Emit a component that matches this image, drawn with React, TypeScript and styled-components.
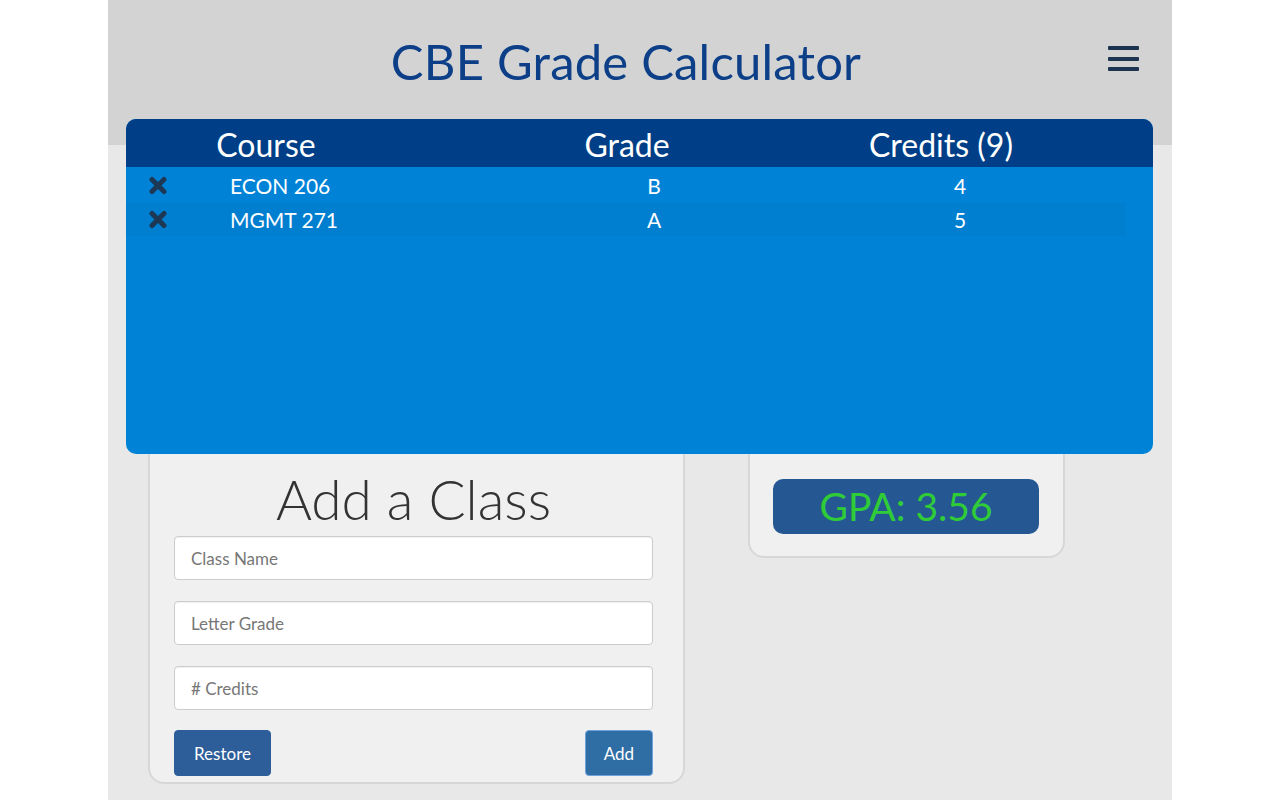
import React from "react";
import styled, { createGlobalStyle } from "styled-components";

const GlobalStyle = createGlobalStyle`
  html, body {
    margin: 0;
    padding: 0;
    background: #ffffff;
  }
  body {
    font-family: Lato, "Noto Sans", "Liberation Sans", sans-serif;
  }
  * {
    box-sizing: border-box;
  }
`;

const Page = styled.div`
  width: 1064px;
  min-height: 100vh;
  margin: 0 auto;
  background: #e8e8e8;
  display: flex;
  flex-direction: column;
`;

const Header = styled.header`
  height: 145px;
  background: #d3d3d3;
  display: grid;
  grid-template-columns: 1fr auto 1fr;
  align-items: start;
  padding: 31px 28px 0 0;
`;

const Title = styled.h1`
  grid-column: 2;
  margin: 0;
  font-size: 49px;
  line-height: 60px;
  font-weight: 400;
  color: #0c3f88;
  letter-spacing: 0.2px;
`;

const MenuButton = styled.button`
  grid-column: 3;
  justify-self: end;
  margin: 15px 5px 0 0;
  padding: 0;
  width: 31px;
  height: 25px;
  border: none;
  background: transparent;
  display: flex;
  flex-direction: column;
  justify-content: space-between;
  cursor: pointer;

  & span {
    display: block;
    height: 4px;
    border-radius: 1px;
    background: #1c3450;
  }
`;

const Main = styled.main`
  flex: 1;
  padding: 0 19px 0 18px;
`;

const Panel = styled.section`
  position: relative;
  z-index: 1;
  margin-top: -26px;
  height: 335px;
  border-radius: 10px;
  overflow: hidden;
  background: #0083d7;
  color: #ffffff;
`;

const HeadRow = styled.div`
  height: 48px;
  background: #003f87;
  display: grid;
  grid-template-columns: 280px 442px 186px 1fr;
  align-items: center;
  font-size: 32px;
  line-height: 48px;
`;

const HeadCell = styled.div`
  text-align: center;
  padding-top: 2px;
`;

const Rows = styled.div`
  width: 1000px;
  padding-top: 1px;
`;

const Row = styled.div<{ $striped?: boolean }>`
  height: 34px;
  display: grid;
  grid-template-columns: 64px 336px 256px 344px;
  align-items: center;
  font-size: 21px;
  background: ${(p) => (p.$striped ? "#007ecf" : "transparent")};
`;

const RemoveCell = styled.button`
  justify-self: center;
  border: none;
  background: transparent;
  padding: 0;
  width: 20px;
  height: 20px;
  display: flex;
  align-items: center;
  justify-content: center;
  cursor: pointer;
`;

const CourseCell = styled.div`
  padding-left: 40px;
`;

const Cell = styled.div<{ $shift?: number }>`
  text-align: center;
  padding-left: ${(p) => p.$shift ?? 0}px;
`;

const CardsRow = styled.div`
  display: flex;
  align-items: flex-start;
  gap: 63px;
  margin-top: -30px;
  padding-left: 22px;
`;

const Card = styled.div<{ $width: number }>`
  width: ${(p) => p.$width}px;
  background: #f0f0f0;
  border: 2px solid #d7d7d7;
  border-radius: 16px;
`;

const AddCard = styled(Card)`
  padding: 43px 30px 6px 24px;
  display: flex;
  flex-direction: column;
`;

const CardTitle = styled.h2`
  margin: 0 0 7px;
  text-align: center;
  font-size: 55px;
  line-height: 60px;
  font-weight: 300;
  color: #333333;
`;

const Input = styled.input`
  display: block;
  width: 100%;
  height: 44px;
  margin-bottom: 21px;
  padding: 0 16px;
  border: 1px solid #cccccc;
  border-radius: 4px;
  background: #ffffff;
  font-family: inherit;
  font-size: 17px;
  color: #333333;
  box-shadow: inset 0 1px 1px rgba(0, 0, 0, 0.06);

  &::placeholder {
    color: #777777;
  }
`;

const ButtonRow = styled.div`
  display: flex;
  justify-content: space-between;
  margin-top: -1px;
`;

const Button = styled.button<{ $focused?: boolean }>`
  height: 46px;
  padding: 0 ${(p) => (p.$focused ? 18 : 19)}px;
  border-radius: 4px;
  border: 1px solid ${(p) => (p.$focused ? "#6ea3dc" : "#2d5e99")};
  background: ${(p) => (p.$focused ? "#2f6da5" : "#2d5e99")};
  color: #ffffff;
  font-family: inherit;
  font-size: 17px;
  cursor: pointer;
`;

const GpaCard = styled(Card)`
  padding: 53px 24px 22px 23px;
`;

const GpaBadge = styled.div`
  height: 55px;
  border-radius: 10px;
  background: #255893;
  color: #2fcc38;
  font-size: 39px;
  line-height: 55px;
  text-align: center;
`;

const RemoveIcon = () => (
  <svg width="20" height="19" viewBox="0 0 20 19">
    <path
      d="M4 3.5 L16 15.5 M16 3.5 L4 15.5"
      stroke="#1d3854"
      strokeWidth="5"
      strokeLinecap="round"
    />
  </svg>
);

const courses = [
  { name: "ECON 206", grade: "B", credits: 4 },
  { name: "MGMT 271", grade: "A", credits: 5 },
];

const App = () => {
  const total = courses.reduce((sum, c) => sum + c.credits, 0);

  return (
    <>
      <GlobalStyle />
      <Page>
        <Header>
          <Title>CBE Grade Calculator</Title>
          <MenuButton aria-label="Menu">
            <span />
            <span />
            <span />
          </MenuButton>
        </Header>
        <Main>
          <Panel>
            <HeadRow>
              <HeadCell>Course</HeadCell>
              <HeadCell>Grade</HeadCell>
              <HeadCell>Credits ({total})</HeadCell>
            </HeadRow>
            <Rows>
              {courses.map((c, i) => (
                <Row key={c.name} $striped={i % 2 === 1}>
                  <RemoveCell aria-label="Remove">
                    <RemoveIcon />
                  </RemoveCell>
                  <CourseCell>{c.name}</CourseCell>
                  <Cell>{c.grade}</Cell>
                  <Cell $shift={12}>{c.credits}</Cell>
                </Row>
              ))}
            </Rows>
          </Panel>
          <CardsRow>
            <AddCard $width={537}>
              <CardTitle>Add a Class</CardTitle>
              <Input placeholder="Class Name" />
              <Input placeholder="Letter Grade" />
              <Input placeholder="# Credits" />
              <ButtonRow>
                <Button>Restore</Button>
                <Button $focused>Add</Button>
              </ButtonRow>
            </AddCard>
            <GpaCard $width={317}>
              <GpaBadge>GPA: 3.56</GpaBadge>
            </GpaCard>
          </CardsRow>
        </Main>
      </Page>
    </>
  );
};

export default App;
